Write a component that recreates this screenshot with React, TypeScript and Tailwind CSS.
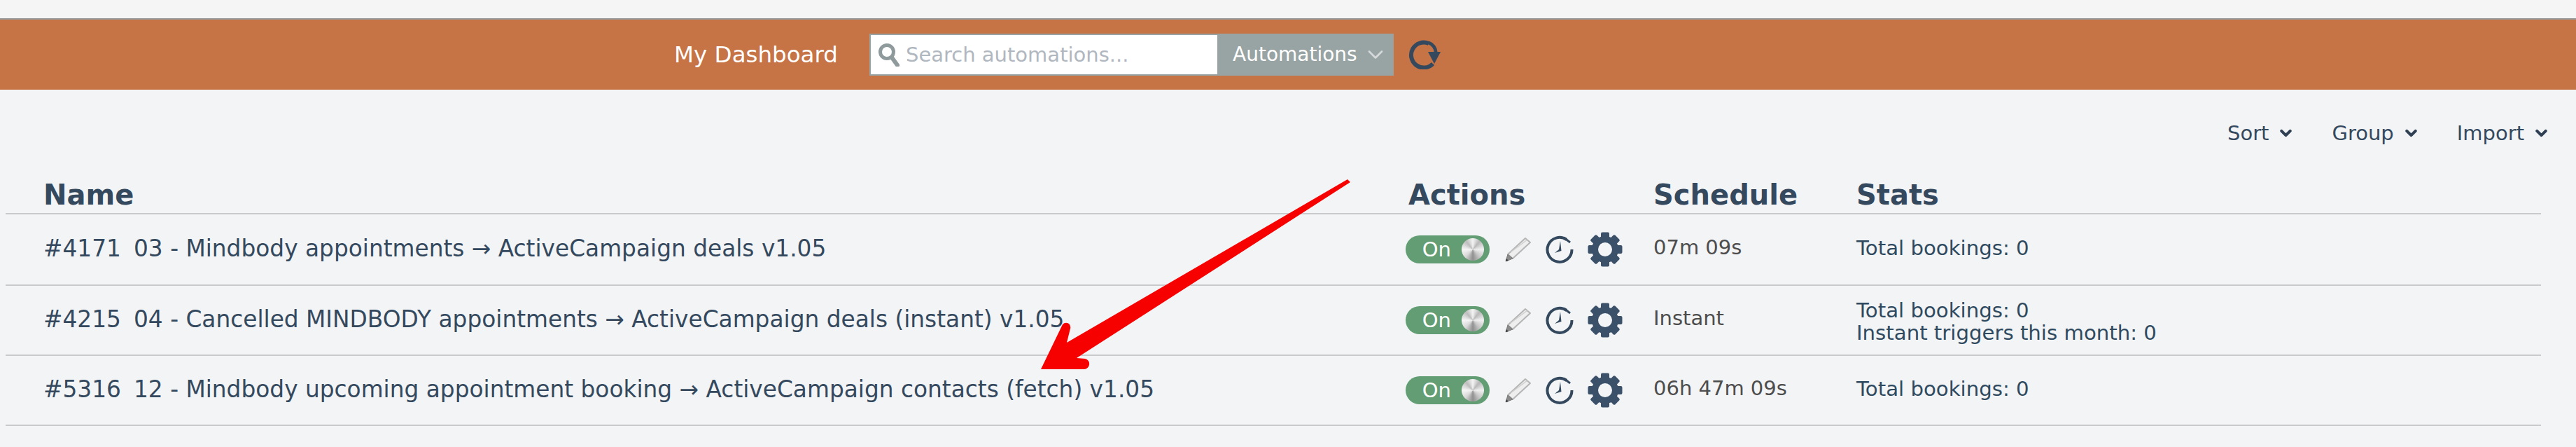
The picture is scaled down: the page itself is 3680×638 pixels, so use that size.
import { ChevronDown } from 'lucide-react'

const rows = [
  {
    id: '#4171',
    name: '03 - Mindbody appointments → ActiveCampaign deals v1.05',
    schedule: '07m 09s',
    stats: ['Total bookings: 0'],
    height: 'h-[102px]',
  },
  {
    id: '#4215',
    name: '04 - Cancelled MINDBODY appointments → ActiveCampaign deals (instant) v1.05',
    schedule: 'Instant',
    stats: ['Total bookings: 0', 'Instant triggers this month: 0'],
    height: 'h-[100px]',
  },
  {
    id: '#5316',
    name: '12 - Mindbody upcoming appointment booking → ActiveCampaign contacts (fetch) v1.05',
    schedule: '06h 47m 09s',
    stats: ['Total bookings: 0'],
    height: 'h-[100px]',
  },
]

const gridCols = 'grid grid-cols-[2000px_354px_290px_1fr] items-center'

function SearchIcon() {
  return (
    <svg viewBox="0 0 32 34" className="h-[34px] w-[32px] shrink-0" fill="none" stroke="#8f9a9c">
      <circle cx="13" cy="13" r="9.5" strokeWidth="5" />
      <path d="M20 21 L28 32" strokeWidth="6" strokeLinecap="round" />
    </svg>
  )
}

function RefreshIcon() {
  return (
    <svg viewBox="0 0 48 42" className="ml-5 h-[42px] w-[48px] shrink-0" fill="none">
      <path d="M30 5 A18 18 0 1 0 36 34" stroke="#34495e" strokeWidth="6" />
      <path d="M30 4 C36 6 40 12 40 17" stroke="#34495e" strokeWidth="5" />
      <path d="M29 17 L47 17 L38 34 Z" fill="#34495e" />
    </svg>
  )
}

function PencilIcon() {
  return (
    <svg viewBox="0 0 38 36" className="h-[36px] w-[38px]">
      <path d="M29 2 L36 8 L11 31 L4 25 Z" fill="#eeeeee" stroke="#b5b5b5" strokeWidth="2" strokeLinejoin="round" />
      <path d="M8 22 L32 4" stroke="#d0d0d0" strokeWidth="1.5" />
      <path d="M4 25 L11 31 L1 35 Z" fill="#8b8b8b" stroke="#7a7a7a" strokeWidth="1" />
      <path d="M1 35 L2 31 L5 34 Z" fill="#3a3a3a" />
    </svg>
  )
}

function ClockIcon() {
  return (
    <svg viewBox="0 0 40 40" className="h-[40px] w-[40px]" fill="none">
      <path d="M30 6 A17.5 17.5 0 1 0 37.5 20" stroke="#34495e" strokeWidth="4" />
      <path d="M26 3 L35 10" stroke="#34495e" strokeWidth="3" />
      <path d="M21 8 L22.5 22 L13 25 L19 20 Z" fill="#34495e" />
    </svg>
  )
}

function GearIcon() {
  const teeth = [0, 45, 90, 135, 180, 225, 270, 315]
  return (
    <svg viewBox="0 0 50 50" className="h-[50px] w-[50px]">
      {teeth.map((a) => (
        <rect key={a} x="19" y="0.5" width="12" height="12" rx="2" fill="#3b5069" transform={`rotate(${a} 25 25)`} />
      ))}
      <circle cx="25" cy="25" r="14.5" fill="none" stroke="#3b5069" strokeWidth="9" />
    </svg>
  )
}

function Toggle() {
  return (
    <div className="flex h-[40px] w-[120px] items-center justify-end rounded-full bg-[#639d73] pr-[8px]">
      <span className="mr-[15px] text-[29px] leading-none text-white">On</span>
      <span className="h-[32px] w-[32px] rounded-full bg-[conic-gradient(#f4f4f4_0deg,#b8b8b8_40deg,#f0f0f0_90deg,#c4c4c4_140deg,#8f8f8f_180deg,#d8d8d8_225deg,#f6f6f6_270deg,#bcbcbc_320deg,#f4f4f4_360deg)]" />
    </div>
  )
}

function Menu({ label }: { label: string }) {
  return (
    <span className="flex items-center gap-[12px] text-[29px] leading-none text-[#34495e]">
      {label}
      <ChevronDown className="h-[26px] w-[25px]" strokeWidth={4} color="#2f3f54" />
    </span>
  )
}

export default function App() {
  return (
    <div className="relative h-[638px] overflow-hidden bg-[#f3f4f6] font-['DejaVu_Sans',sans-serif]">
      <div className="h-[26px] bg-[#f5f5f5]" />
      <header className="flex h-[102px] items-center border-t-2 border-[#999999] bg-[#c67346] pl-[963px]">
        <span className="w-[279px] text-[32.5px] leading-none text-white">My Dashboard</span>
        <div className="flex h-[60px] w-[749px] bg-[#98a3a3] p-[2px]">
          <div className="flex w-[495px] items-center gap-[8px] bg-white pl-[10px]">
            <SearchIcon />
            <span className="text-[29px] leading-none text-[#b0b7bf]">Search automations...</span>
          </div>
          <div className="flex flex-1 items-center justify-between pl-[22px] pr-[6px] text-[28px] leading-none text-white">
            Automations
            <ChevronDown className="h-[42px] w-[36px]" strokeWidth={1.8} color="#d5d9d9" />
          </div>
        </div>
        <RefreshIcon />
      </header>

      <div className="flex h-[124px] items-center justify-end gap-[53px] pr-[37px]">
        <Menu label="Sort" />
        <Menu label="Group" />
        <Menu label="Import" />
      </div>

      <div className="ml-[8px] w-[3622px]">
        <div className={`${gridCols} h-[54px] border-b-2 border-[#c9cacc] text-[40px] font-bold leading-none text-[#34495e]`}>
          <span className="pl-[54px]">Name</span>
          <span className="pl-[4px]">Actions</span>
          <span>Schedule</span>
          <span>Stats</span>
        </div>
        {rows.map((row) => (
          <div key={row.id} className={`${gridCols} ${row.height} border-b-2 border-[#c9cacc]`}>
            <div className="flex pb-[2px] pl-[54px] text-[32.8px] leading-none text-[#34495e]">
              <span className="w-[129px]">{row.id}</span>
              <span>{row.name}</span>
            </div>
            <div className="flex items-center">
              <Toggle />
              <div className="ml-[22px] flex items-center gap-[20px]">
                <PencilIcon />
                <ClockIcon />
                <GearIcon />
              </div>
            </div>
            <span className="pb-[5px] text-[29px] leading-none text-[#4d4d4d]">{row.schedule}</span>
            <div className={`${row.stats.length === 1 ? 'pb-[5px]' : 'pt-[4px]'} text-[29.2px] leading-[32px] text-[#2f4a5f]`}>
              {row.stats.map((line) => (
                <div key={line}>{line}</div>
              ))}
            </div>
          </div>
        ))}
      </div>

      {/* red annotation arrow on top of the table */}
      <svg viewBox="0 0 3680 638" className="pointer-events-none absolute left-0 top-0 h-[638px] w-[3680px]">
        <path
          d="M1925 256 L1929 260 L1538 511 L1550 512 Q1557 514 1556 521 Q1554 527 1548 527 L1487 527 L1518 463 Q1522 459 1527 462 Q1530 465 1529 469 L1524 489 Z"
          fill="#f60000"
        />
      </svg>
    </div>
  )
}
